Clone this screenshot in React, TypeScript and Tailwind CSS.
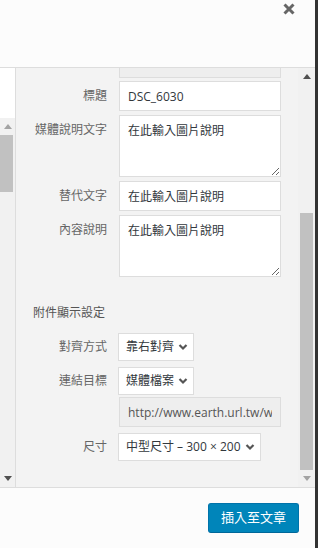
import type { ReactNode } from "react";

function Chevron() {
  return (
    <svg width="10" height="8" viewBox="0 0 10 8" className="shrink-0">
      <path d="M1.5 2 L5 5.5 L8.5 2" fill="none" stroke="#555" strokeWidth="2.2" />
    </svg>
  );
}

function Arrow({ up, color }: { up?: boolean; color: string }) {
  return (
    <svg width="8" height="5" viewBox="0 0 8 5">
      <path d={up ? "M0 5 L4 0 L8 5 Z" : "M0 0 L8 0 L4 5 Z"} fill={color} />
    </svg>
  );
}

function Row({ label, children }: { label: string; children: ReactNode }) {
  return (
    <div className="flex items-start">
      <div className="w-[91px] shrink-0 pt-[6px] text-right text-[12px] leading-[18px] text-[#666]">
        {label}
      </div>
      <div className="ml-[12px]">{children}</div>
    </div>
  );
}

function Field({ value, tall, muted }: { value: string; tall?: boolean; muted?: boolean }) {
  return tall ? (
    <textarea
      readOnly
      defaultValue={value}
      className="block h-[62px] w-[162px] resize border border-[#ddd] bg-white px-[8px] py-[6px] text-[12px] leading-[18px] text-[#32373c] outline-none"
    />
  ) : (
    <input
      readOnly
      value={value}
      className={
        muted
          ? "block h-[30px] w-[162px] border border-[#ddd] bg-[#eee] px-[8px] text-[12px] text-[#555] outline-none"
          : "block h-[30px] w-[162px] border border-[#ddd] bg-white px-[8px] text-[12px] text-[#32373c] outline-none"
      }
    />
  );
}

function Select({ value, width }: { value: string; width: string }) {
  return (
    <div
      className={`flex h-[28px] items-center justify-between border border-[#ddd] bg-white pl-[7px] pr-[5px] text-[12px] text-[#32373c] ${width}`}
    >
      <span className="whitespace-nowrap">{value}</span>
      <Chevron />
    </div>
  );
}

export default function App() {
  return (
    <div className="flex h-[548px] w-[318px] overflow-hidden font-['Open_Sans','Noto_Sans_CJK_TC',sans-serif]">
      <div className="flex w-[315px] flex-col">
        {/* header */}
        <div className="flex h-[68px] shrink-0 justify-end border-b border-[#ddd] bg-[#fcfcfc] pr-[20px] pt-[3px]">
          <svg width="12" height="12" viewBox="0 0 12 12">
            <path d="M1.5 1.5 L10.5 10.5 M10.5 1.5 L1.5 10.5" stroke="#666" strokeWidth="3" />
          </svg>
        </div>

        {/* content */}
        <div className="flex min-h-0 flex-1 border-b border-[#ddd]">
          <div className="flex w-[15px] flex-col bg-white">
            <div className="h-[50px]" />
            <div className="flex flex-1 flex-col bg-[#f1f1f1]">
              <div className="flex h-[17px] items-center justify-center">
                <Arrow up color="#a3a3a3" />
              </div>
              <div className="h-[57px] w-[13px] bg-[#c1c1c1]" />
              <div className="flex-1" />
              <div className="flex h-[17px] items-center justify-center">
                <Arrow color="#505050" />
              </div>
            </div>
          </div>
          <div className="w-px bg-[#ddd]" />

          <div className="flex flex-1 bg-[#f3f3f3]">
            <div className="flex flex-1 flex-col overflow-hidden">
              <div className="ml-[103px] h-[10px] w-[162px] border-x border-b border-[#ddd] bg-[#eee]" />
              <div className="mt-[3px] flex flex-col gap-[4px]">
                <Row label="標題">
                  <Field value="DSC_6030" />
                </Row>
                <Row label="媒體說明文字">
                  <Field value="在此輸入圖片說明" tall />
                </Row>
                <Row label="替代文字">
                  <Field value="在此輸入圖片說明" />
                </Row>
                <Row label="內容說明">
                  <Field value="在此輸入圖片說明" tall />
                </Row>
              </div>

              <div className="mt-[27px] pl-[17px] text-[12px] leading-[18px] text-[#555]">附件顯示設定</div>

              <div className="mt-[11px] flex items-center">
                <div className="w-[91px] text-right text-[12px] text-[#666]">對齊方式</div>
                <div className="ml-[11px]">
                  <Select value="靠右對齊" width="w-[76px]" />
                </div>
              </div>
              <div className="mt-[6px] flex items-center">
                <div className="w-[91px] text-right text-[12px] text-[#666]">連結目標</div>
                <div className="ml-[11px]">
                  <Select value="媒體檔案" width="w-[76px]" />
                </div>
              </div>
              <div className="ml-[103px] mt-[2px]">
                <Field value="http://www.earth.url.tw/wp-content/uploads" muted />
              </div>
              <div className="mt-[6px] flex items-center">
                <div className="w-[91px] text-right text-[12px] text-[#666]">尺寸</div>
                <div className="ml-[11px]">
                  <Select value="中型尺寸 – 300 × 200" width="w-[143px]" />
                </div>
              </div>
            </div>

            <div className="flex w-[17px] flex-col items-center bg-[#f1f1f1]">
              <div className="flex h-[17px] items-center justify-center">
                <Arrow up color="#505050" />
              </div>
              <div className="h-[128px]" />
              <div className="h-[257px] w-[13px] bg-[#c1c1c1]" />
              <div className="flex flex-1 items-center justify-center">
                <Arrow color="#a3a3a3" />
              </div>
            </div>
          </div>
        </div>

        {/* footer */}
        <div className="flex h-[60px] shrink-0 items-start justify-end bg-[#fcfcfc] pr-[16px] pt-[15px]">
          <button
            type="button"
            className="h-[30px] w-[91px] rounded-[3px] border border-[#0073aa] border-b-[#006799] bg-[#0085ba] text-[13px] text-white"
          >
            插入至文章
          </button>
        </div>
      </div>
      <div className="w-[3px] bg-[#333]" />
    </div>
  );
}
